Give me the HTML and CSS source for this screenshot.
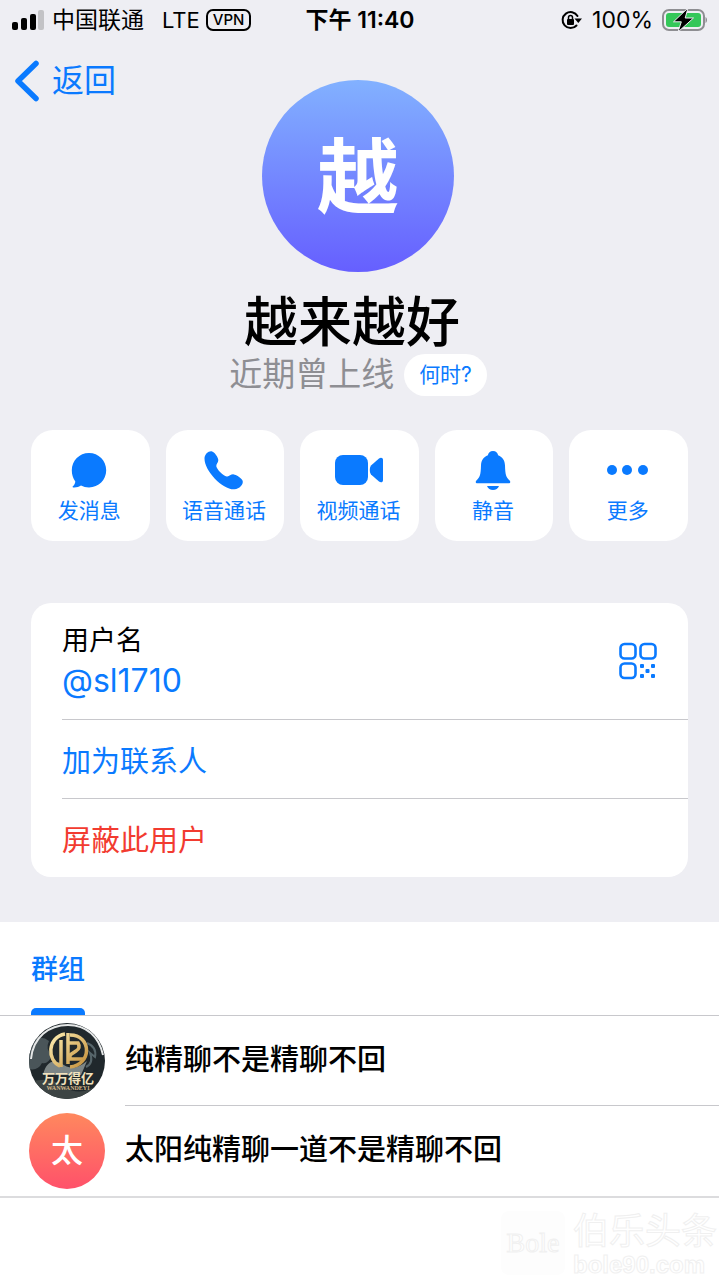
FILE: index.html
```html
<!DOCTYPE html>
<html lang="zh-CN">
<head>
  <meta charset="UTF-8">
  <meta name="viewport" content="width=device-width, initial-scale=1.0">
  <title>越来越好</title>
  <link rel="stylesheet" href="styles.css">
</head>
<body>
  <div class="status-bar">
    <div class="status-left">
      <svg class="signal" width="32" height="20" viewBox="0 0 32 20">
        <rect x="0" y="12" width="6" height="8" rx="2"/>
        <rect x="9" y="8" width="6" height="12" rx="2"/>
        <rect x="18" y="4" width="6" height="16" rx="2"/>
        <rect x="26" y="0" width="6" height="20" rx="2" fill="#c3c3c6"/>
      </svg>
      <span class="carrier">中国联通</span>
      <span class="network">LTE</span>
      <span class="vpn">VPN</span>
    </div>
    <div class="status-time">下午 11:40</div>
    <div class="status-right">
      <svg width="22" height="20" viewBox="0 0 22 20">
        <path d="M16.5 6A8 8 0 1 0 15.500 15.500" fill="none" stroke="#000" stroke-width="2" stroke-linecap="round"/>
        <path d="M13.500 8.500H21L17.300 13z"/>
        <rect x="6" y="9" width="7" height="6" rx="1"/>
        <path d="M7.500 9.500V7.500a2 2 0 0 1 4 0v2" fill="none" stroke="#000" stroke-width="1.500"/>
      </svg>
      <span>100%</span>
      <svg width="46" height="24" viewBox="0 0 46 24">
        <rect x="1" y="2" width="41" height="20" rx="6" fill="none" stroke="#8e8e92" stroke-width="2"/>
        <rect x="4" y="5" width="35" height="14" rx="3" fill="#34c759"/>
        <path d="M43.500 9c2 1 2 5 0 6z" fill="#8e8e92"/>
        <path d="M26 0L11.500 13.800h7.800L16 24l15.500-14h-8.300z" stroke="#eeeef3" stroke-width="1" stroke-linejoin="round"/>
      </svg>
    </div>
  </div>

  <nav class="nav">
    <a href="#" class="back">
      <svg width="25" height="42" viewBox="0 0 25 42">
        <path d="M22 3.500L4 21l18 17.500" fill="none" stroke="currentColor" stroke-width="5.500" stroke-linecap="round" stroke-linejoin="round"/>
      </svg>
      返回
    </a>
  </nav>

  <header class="profile">
    <div class="avatar">越</div>
    <h1 class="name">越来越好</h1>
    <div class="last-seen">
      <span>近期曾上线</span>
      <button class="when">何时?</button>
    </div>
  </header>

  <div class="actions">
    <button class="action">
      <svg width="44" height="42" viewBox="0 0 44 42">
        <path d="M22 4c9.600 0 17.200 7.600 17.200 17.200S31.600 38.400 22 38.400c-3 0-5.600-.6-8-1.900-2 1.300-5 2.200-7.800 1.900-.7-.1-.8-.8-.3-1.200 1.500-1.300 2.300-3 2.400-4.800C6 29.300 4.800 25.500 4.800 21.200 4.800 11.600 12.400 4 22 4z"/>
      </svg>
      <span>发消息</span>
    </button>
    <button class="action">
      <svg width="44" height="42" viewBox="0 0 44 42">
        <path d="M2.500 9.500C2.500 5 6.500 1.800 9.500 2.200c3 .4 6.800 6.300 6.800 9 0 2.500-2.300 3.800-2 6 .5 3.200 6.800 9.500 10.400 10.300 2.500.6 4-2.500 7-2.100 3 .4 8.300 4 9 6.500.8 3.300-3.200 7.900-8.200 8.400C21.500 41.300 2.500 22.500 2.500 9.500z"/>
      </svg>
      <span>语音通话</span>
    </button>
    <button class="action">
      <svg width="50" height="42" viewBox="0 0 50 42">
        <rect x="2" y="6" width="33" height="30" rx="8"/>
        <path d="M38 16.500l8-7c2-1.600 4-.7 4 1.500v20c0 2.200-2 3.100-4 1.500l-8-7c-1.600-2-1.600-7 0-9z"/>
      </svg>
      <span>视频通话</span>
    </button>
    <button class="action">
      <svg width="44" height="42" viewBox="0 0 44 42">
        <path d="M22 2c3 0 4.600 1.800 5.100 4.300 4.600 1.700 6.700 5.500 6.900 10.200.3 9.500 1 11.500 4.600 15 1.300 1.300.6 2.800-1 2.800H6.400c-1.600 0-2.300-1.500-1-2.800 3.600-3.500 4.300-5.500 4.600-15 .2-4.700 2.300-8.500 6.900-10.200C17.400 3.800 19 2 22 2z"/>
        <path d="M16 37h12c-1 2.700-3.200 4-6 4s-5-1.300-6-4z"/>
      </svg>
      <span>静音</span>
    </button>
    <button class="action">
      <svg width="44" height="42" viewBox="0 0 44 42">
        <circle cx="6" cy="21" r="5"/>
        <circle cx="21" cy="21" r="5"/>
        <circle cx="37" cy="21" r="5"/>
      </svg>
      <span>更多</span>
    </button>
  </div>

  <section class="card">
    <div class="row username">
      <div>
        <div class="label">用户名</div>
        <a href="#" class="handle">@sl1710</a>
      </div>
      <button class="qr" aria-label="二维码">
        <svg width="38" height="38" viewBox="0 0 38 38">
          <g fill="none" stroke="#0a7aff" stroke-width="2.600">
            <rect x="1.500" y="2" width="15" height="14.500" rx="4"/>
            <rect x="21.500" y="2" width="15" height="14.500" rx="4"/>
            <rect x="1.500" y="21.500" width="15" height="14.500" rx="4"/>
          </g>
          <rect x="21" y="22" width="4" height="4" rx="1"/>
          <rect x="32" y="22" width="4" height="4" rx="1"/>
          <rect x="26.500" y="27" width="4" height="4" rx="1"/>
          <rect x="21" y="32" width="4" height="4" rx="1"/>
          <rect x="32" y="32" width="4" height="4" rx="1"/>
        </svg>
      </button>
    </div>
    <button class="row">加为联系人</button>
    <button class="row danger">屏蔽此用户</button>
  </section>

  <main class="groups">
    <div class="tabs">
      <button class="tab">群组</button>
    </div>
    <a href="#" class="group">
      <svg class="group-pic" width="76" height="76" viewBox="0 0 76 76">
        <defs>
          <clipPath id="round"><circle cx="38" cy="38" r="38"/></clipPath>
          <linearGradient id="gold" gradientUnits="userSpaceOnUse" x1="22" y1="10" x2="58" y2="46">
            <stop offset="0" stop-color="#fff0b4"/>
            <stop offset="1" stop-color="#c18b35"/>
          </linearGradient>
        </defs>
        <g clip-path="url(#round)">
          <rect width="76" height="76" fill="#20282c"/>
          <path d="M0 22Q10 10 20 18q-4 8 3 14-4 10-10 8-4 8-13 6z" fill="#4a5559"/>
          <path d="M14 52q4-18 18-12 12 10 26-2l-6 14z" fill="#7d8686"/>
          <path d="M58 20q10 4 8 14l-5-4q4 10-4 14" fill="none" stroke="#56656a" stroke-width="2"/>
          <path d="M0 60q18-8 36 4t40-8v20H0z" fill="#3d4444"/>
          <path d="M2 36C4 14 20 2 39 2s31 12 35 30" fill="none" stroke="#e6e8e8" stroke-width="2"/>
          <g fill="none" stroke="url(#gold)" stroke-width="3.500">
            <path d="M36 11C18 14 18 38 31 43"/>
            <path d="M32 17v27"/>
            <path d="M39 10v31"/>
            <path d="M41 12c22 0 22 30 0 32"/>
            <path d="M40 20h9q3 5-2 8l-6 4v4h13"/>
          </g>
          <text x="39" y="60" class="pic-title">万万得亿</text>
          <text x="39" y="67" class="pic-sub">WANWANDEYI</text>
        </g>
      </svg>
      <span class="group-name">纯精聊不是精聊不回</span>
    </a>
    <a href="#" class="group">
      <span class="group-pic letter">太</span>
      <span class="group-name">太阳纯精聊一道不是精聊不回</span>
    </a>
  </main>

  <footer class="watermark">
    <div class="mark">Bole</div>
    <div class="site">
      <div class="site-name">伯乐头条</div>
      <div class="site-url">bole90.com</div>
    </div>
  </footer>
</body>
</html>
```
FILE: styles.css
```css
* {
  box-sizing: border-box;
}
body {
  margin: 0;
  min-height: 100vh;
  display: flex;
  flex-direction: column;
  background-color: #eeeef3;
  color: #000;
  font-family: Inter, "Noto Sans CJK SC", sans-serif;
}
button {
  margin: 0;
  padding: 0;
  border: none;
  background: none;
  color: #0a7aff;
  font-family: inherit;
  cursor: pointer;
}
a {
  color: #0a7aff;
  text-decoration: none;
}
svg {
  display: block;
  flex: none;
}

/* Status bar */
.status-bar {
  display: grid;
  grid-template-columns: 1fr auto 1fr;
  align-items: center;
  height: 40px;
  padding: 0 11px 0 12px;
  font-size: 23px;
  line-height: 40px;
}
.status-left, .status-right {
  display: flex;
  align-items: center;
}
.status-right {
  justify-content: flex-end;
  gap: 9px;
}
.carrier {
  margin-left: 8px;
}
.network {
  margin-left: 18px;
  font-size: 22px;
}
.vpn {
  margin-left: 6px;
  padding: 0 5px;
  border: 2px solid #000;
  border-radius: 7px;
  font-size: 15px;
  font-weight: 500;
  line-height: 18px;
}
.status-time {
  font-size: 23px;
  font-weight: 600;
}

/* Back link */
.nav {
  height: 40px;
  padding: 20px 14px 0;
}
.back {
  display: inline-flex;
  align-items: center;
  gap: 13px;
  font-size: 32px;
  line-height: 42px;
}

/* Profile */
.profile {
  display: flex;
  flex-direction: column;
  align-items: center;
  padding-right: 3px;
}
.avatar {
  width: 192px;
  height: 192px;
  border-radius: 50%;
  background: linear-gradient(#82b1ff, #665fff);
  color: #fff;
  font-size: 82px;
  font-weight: 700;
  line-height: 196px;
  text-align: center;
}
.name {
  margin: 21px 0 0;
  padding-right: 12px;
  font-size: 54px;
  font-weight: 500;
  line-height: 60px;
}
.last-seen {
  display: flex;
  align-items: center;
  gap: 10px;
  color: #8e8e93;
  font-size: 33px;
  line-height: 43px;
}
.when {
  height: 42px;
  padding: 0 15px;
  border-radius: 21px;
  background-color: #fff;
  font-size: 21px;
  line-height: 40px;
}

/* Action buttons */
.actions {
  display: grid;
  grid-template-columns: repeat(5, 1fr);
  gap: 16px;
  padding: 34px 31px 0;
}
.action {
  display: flex;
  flex-direction: column;
  align-items: center;
  height: 111px;
  padding: 19px 2px 0 0;
  border-radius: 22px;
  background-color: #fff;
  font-size: 21px;
  line-height: 40px;
}
.action svg, .qr svg {
  fill: #0a7aff;
}

/* Info card */
.card {
  margin: 62px 31px 0;
  padding-left: 31px;
  border-radius: 20px;
  background-color: #fff;
}
.row {
  display: block;
  width: 100%;
  height: 79px;
  border-bottom: 1px solid #c8c8cc;
  font-size: 29px;
  text-align: left;
}
.row:last-child {
  height: 78px;
  border-bottom: none;
}
.username {
  display: flex;
  justify-content: space-between;
  align-items: center;
  height: 117px;
  padding-right: 31px;
}
.label {
  font-size: 27px;
  line-height: 40px;
}
.handle {
  display: block;
  font-size: 32px;
  line-height: 40px;
}
.danger {
  color: #f23b30;
}

/* Groups */
.groups {
  margin-top: 45px;
  background-color: #fff;
}
.tabs {
  padding: 0 31px;
  border-bottom: 1px solid #c8c8cc;
}
.tab {
  display: flex;
  flex-direction: column;
  justify-content: space-between;
  height: 93px;
  font-size: 27px;
  font-weight: 500;
  line-height: 96px;
}
.tab::after {
  content: "";
  width: 100%;
  height: 7px;
  margin-top: -10px;
  border-radius: 5px 5px 0 0;
  background-color: #0a7aff;
}
.group {
  display: flex;
  align-items: center;
  gap: 20px;
  height: 90px;
  padding-left: 29px;
  color: #000;
}
.group:last-child {
  height: 92px;
  border-bottom: 2px solid #dcdcde;
}
.group-pic {
  flex: none;
  width: 76px;
  height: 76px;
}
.letter {
  border-radius: 50%;
  background: linear-gradient(#ff885e, #ff516a);
  color: #fff;
  font-size: 32px;
  font-weight: 500;
  line-height: 76px;
  text-align: center;
}
.group-name {
  flex: 1;
  height: 100%;
  border-bottom: 1px solid #c8c8cc;
  font-size: 29px;
  font-weight: 500;
  line-height: 88px;
}
.group:last-child .group-name {
  border-bottom: none;
}
.pic-title {
  fill: #f2e2bd;
  font-size: 13px;
  font-weight: 700;
  text-anchor: middle;
}
.pic-sub {
  fill: #d8b98a;
  font-family: "Liberation Serif", serif;
  font-size: 6px;
  font-weight: 700;
  text-anchor: middle;
}

/* Watermark */
.watermark {
  flex: 1;
  display: flex;
  justify-content: flex-end;
  gap: 8px;
  padding: 13px 2px 0 0;
  background-color: #fff;
  color: #fff;
  -webkit-text-stroke: 1px #f0f0f0;
}
.mark {
  width: 64px;
  height: 64px;
  border-radius: 8px;
  background-color: #fdfdfd;
  font-family: "Liberation Serif", serif;
  font-size: 28px;
  line-height: 64px;
  text-align: center;
}
.site-name {
  font-size: 36px;
  line-height: 40px;
}
.site-url {
  font-family: "Liberation Sans", sans-serif;
  font-size: 24px;
  font-weight: 700;
  line-height: 28px;
}
```
